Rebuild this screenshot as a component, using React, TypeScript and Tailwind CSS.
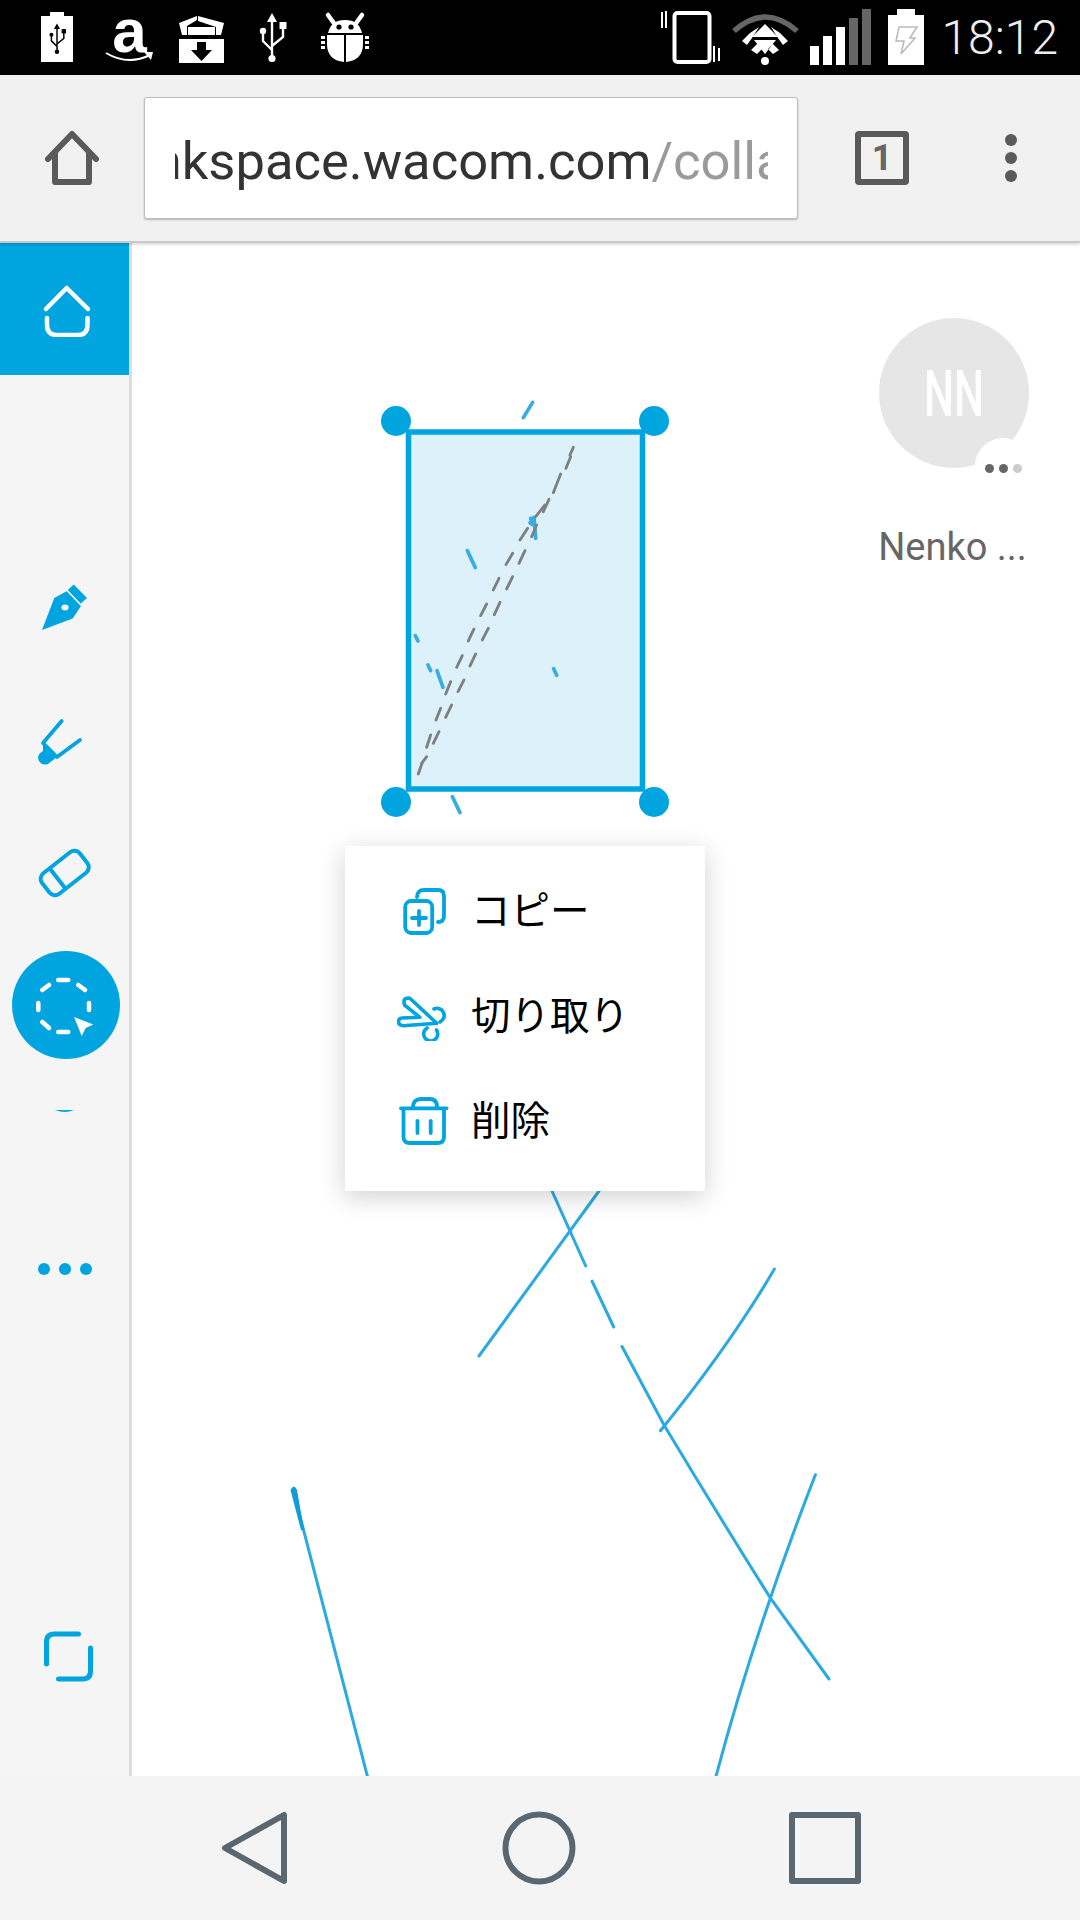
const BLUE = "#00a5e0";

const UsbGlyph = ({ color }: { color: string }) => (
  <g stroke={color} fill="none" strokeWidth="2.4">
    <path d="M272 20V58M263 33V41L272 50M283 27V37L272 46" />
    <circle cx="272" cy="58.5" r="3.6" fill={color} stroke="none" />
    <circle cx="263" cy="31" r="3.2" fill={color} stroke="none" />
    <rect x="279.5" y="22" width="7" height="7" fill={color} stroke="none" />
    <path d="M272 13L277 22H267Z" fill={color} stroke="none" />
  </g>
);

const LeftStatusIcons = () => (
  <svg width="340" height="75" viewBox="35 0 340 75" className="shrink-0">
    {/* usb battery */}
    <path d="M50 12H64V16H73V62H41V16H50Z" fill="#fff" />
    <g transform="translate(57 39) scale(.62) translate(-272 -38)">
      <UsbGlyph color="#000" />
    </g>
    {/* amazon */}
    <text x="129.5" y="52" textAnchor="middle" fontSize="62" fontWeight="700" fill="#fff" fontFamily="Liberation Sans, sans-serif">
      a
    </text>
    <path d="M106 53Q128 66 150 55" fill="none" stroke="#fff" strokeWidth="2" />
    <path d="M144 52L153 52L151 60Z" fill="#fff" />
    {/* downloads box */}
    <path d="M179 23L197 16V20L187 26V35H182ZM198 16L224 23L221 35H216V27L198 21Z" fill="#fff" />
    <rect x="188" y="27" width="27" height="8" fill="#fff" />
    <rect x="179" y="39" width="45" height="24" fill="#fff" />
    <path d="M197 42H206V50H212L201.5 61L191 50H197Z" fill="#000" />
    {/* usb */}
    <UsbGlyph color="#fff" />
    {/* bug */}
    <path d="M328 15L336 26M362 15L354 26" stroke="#fff" strokeWidth="4.5" strokeLinecap="round" />
    <path d="M328 33Q331 20 345 20Q359 20 362 33Z" fill="#fff" />
    <circle cx="339" cy="27" r="2.6" fill="#000" />
    <circle cx="351" cy="27" r="2.6" fill="#000" />
    <path d="M327 35H344V62Q327 60 327 44ZM346 35H363V44Q363 60 346 62Z" fill="#fff" />
    <path d="M321 36H325V39H321ZM321 41H325V44H321ZM321 46H325V49H321ZM365 36H369V39H365ZM365 41H369V44H365ZM365 46H369V49H365Z" fill="#fff" />
  </svg>
);

const RightStatusIcons = () => (
  <svg width="270" height="75" viewBox="660 0 270 75" className="shrink-0">
    {/* vibrate */}
    <rect x="675.5" y="13" width="35" height="49" rx="3" fill="none" stroke="#fff" strokeWidth="4" />
    <path d="M663 12V28M667 11V28M715 46V62M720 48V61" stroke="#fff" strokeWidth="2" />
    {/* wifi */}
    <path d="M735 31Q766 3 798 31" fill="none" stroke="#666" strokeWidth="5.5" />
    <path d="M766 24L779 37H753Z" fill="#fff" />
    <path d="M743 41L751 33L760 27L753 38L748 45ZM789 41L781 33L772 27L779 38L784 45ZM752 50L758 44L763 49L758 54ZM780 50L774 44L769 49L774 54ZM755 40H777L766 54Z" fill="#fff" />
    <circle cx="766" cy="61" r="4" fill="#fff" />
    {/* signal */}
    <path d="M811 46H820V65H811ZM824 36H833V65H824ZM837 27H846V65H837Z" fill="#fff" />
    <path d="M850 18H859V65H850ZM863 9H872V65H863Z" fill="#666" />
    {/* battery */}
    <path d="M898 9H916V15H925V65H889V15H898Z" fill="#fff" />
    <path d="M900 27H918L911 38H916L902 54L905 41H897Z" fill="none" stroke="#bbb" strokeWidth="1.6" />
  </svg>
);

const StatusBar = () => (
  <div className="flex h-[75px] shrink-0 items-center justify-between bg-black pl-[35px] pr-[22px]">
    <LeftStatusIcons />
    <div className="flex items-center">
      <RightStatusIcons />
      <span className="ml-3 text-[48px] font-light leading-none text-[#eeeeee]">18:12</span>
    </div>
  </div>
);

const Toolbar = () => (
  <div className="relative z-10 flex h-[168px] shrink-0 items-center border-b-2 border-[#c9c9c9] bg-[#f1f1f1] shadow-[0_2px_2px_rgba(0,0,0,0.12)]">
    <svg width="144" height="60" viewBox="0 129 144 60" className="shrink-0">
      <path
        d="M48 160L72 135L96 160M55 153V183H89V153"
        fill="none"
        stroke="#5a5a5a"
        strokeWidth="6"
        strokeLinecap="round"
        strokeLinejoin="round"
      />
    </svg>
    <div className="flex h-[122px] w-[654px] shrink-0 items-center rounded-[3px] border border-[#bdbdbd] bg-white pl-[30px] pr-[29px] pt-[6px] shadow-[0_1px_2px_rgba(0,0,0,0.25)]">
      <div className="flex w-full overflow-hidden whitespace-nowrap text-[52.5px] leading-[64px]">
        <span className="ml-[-35px] text-[#333333]">inkspace.wacom.com</span>
        <span className="text-[#9a9a9a]">/colla</span>
      </div>
    </div>
    <div className="ml-[57px] flex h-[54px] w-[54px] shrink-0 items-center justify-center rounded-[4px] border-[6px] border-[#5a5a5a] text-[36px] font-bold leading-none text-[#666666]">
      1
    </div>
    <div className="ml-[96px] flex flex-col gap-[6px]">
      <span className="h-3 w-3 rounded-full bg-[#5a5a5a]" />
      <span className="h-3 w-3 rounded-full bg-[#5a5a5a]" />
      <span className="h-3 w-3 rounded-full bg-[#5a5a5a]" />
    </div>
  </div>
);

const Sidebar = () => (
  <div className="flex w-[132px] shrink-0 flex-col items-center border-r-[3px] border-[#dcdcdc] bg-[#f5f5f5]">
    <div className="flex h-[132px] w-full shrink-0 items-center justify-center bg-[#00a5e0]">
      <svg width="50" height="56" viewBox="40 281 50 56">
        <path
          d="M46 309L66.7 288L88 309M47 318V325Q47 335 57 335H78Q87.5 335 87.5 325V318"
          fill="none"
          stroke="#fff"
          strokeWidth="4.5"
          strokeLinecap="round"
          strokeLinejoin="round"
        />
      </svg>
    </div>
    {/* pen */}
    <svg width="48" height="48" viewBox="40 584 48 48" className="mt-[209px] shrink-0">
      <path d="M41 630L53.3 598L66 591L80 606L71.7 618.6Z" fill={BLUE} />
      <path d="M72.7 584.6L86 598L79.3 604L66.7 590Z" fill={BLUE} />
      <path d="M65.5 590L81 606" stroke="#f5f5f5" strokeWidth="1.5" />
      <ellipse cx="64" cy="607.4" rx="3.6" ry="3" fill="#f5f5f5" />
    </svg>
    {/* marker */}
    <svg width="65" height="50" viewBox="32 716 65 50" className="mt-[85px] shrink-0">
      <path d="M61.7 720L43 742L57 756L80 739" stroke={BLUE} strokeWidth="3.8" strokeLinecap="round" strokeLinejoin="round" fill="none" />
      <path d="M43 742L57 756L48 763Q42 765 39 760Q36 754 43 750Z" fill={BLUE} />
    </svg>
    {/* eraser */}
    <svg width="56" height="56" viewBox="36 844 56 56" className="mt-[78px] shrink-0">
      <g transform="translate(63.7 872) rotate(-38)" fill="none" stroke={BLUE} strokeWidth="4">
        <rect x="-24" y="-13" width="48" height="26" rx="7" />
        <path d="M-9 -13V13" />
      </g>
    </svg>
    {/* selection tool, active */}
    <div className="mt-[50px] ml-[2px] flex h-[108px] w-[108px] shrink-0 items-center justify-center rounded-full bg-[#00a5e0]">
      <svg width="108" height="108" viewBox="12 950 108 108">
        <path
          d="M58.3 979H68.3M78.3 984L85 989M89 1002V1009M58.3 1031H68.3M42.3 1021L49 1027M38.3 1002V1009M42.3 989L49 984"
          fill="none"
          stroke="#fff"
          strokeWidth="4.5"
          strokeLinecap="round"
        />
        <path d="M74 1016L93.3 1023.6L85.7 1027L81.7 1035Z" fill="#fff" />
      </svg>
    </div>
    <svg width="24" height="6" viewBox="34 1107 24 6" className="mt-[50px] shrink-0">
      <path d="M36 1108H55Q46 1112 36 1108Z" fill={BLUE} />
    </svg>
    <div className="mt-[148px] flex shrink-0 gap-[9px]">
      <span className="h-3 w-3 rounded-full bg-[#00a5e0]" />
      <span className="h-3 w-3 rounded-full bg-[#00a5e0]" />
      <span className="h-3 w-3 rounded-full bg-[#00a5e0]" />
    </div>
    <svg width="60" height="56" viewBox="34.5 1628 60 56" className="mt-[353px] shrink-0">
      <path
        d="M78 1634H54Q46 1634 46 1642V1664M58 1679H82Q90 1679 90 1671V1648"
        fill="none"
        stroke={BLUE}
        strokeWidth="5"
        strokeLinecap="round"
      />
    </svg>
  </div>
);

// everything drawn on the board, in page coordinates
const BoardDrawing = () => (
  <svg width="948" height="1534" viewBox="132 243 948 1534" className="absolute left-0 top-0">
    <g fill="none" stroke="#2aaae0" strokeWidth="3" strokeLinecap="round">
      <path d="M599 1191L479 1356" />
      <path d="M552 1191L585.7 1266" />
      <path d="M592 1281L613.7 1327" />
      <path d="M622 1346.5L664 1425Q715 1510 771 1599L829 1679" />
      <path d="M774.4 1269Q730 1345 660.4 1430.7" />
      <path d="M293.7 1492L367.6 1777" />
      <path d="M815.4 1474.7Q755 1630 715.8 1777" />
    </g>
    <path d="M290.5 1490Q293.7 1483 297 1490L304 1530H301Z" fill="#0f9cd8" />
    <rect x="408.5" y="432" width="234" height="357" fill="#dcf1fa" stroke={BLUE} strokeWidth="5.5" />
    {/* this group is in 3x crop units, it holds the fine marks of the selection */}
    <g transform="translate(360 390) scale(.3333)" fill="none" strokeLinecap="round">
      <g stroke="#35ade0" strokeWidth="11">
        <path d="M490 83L518 37" />
        <path d="M277 1220L300 1268" />
        <path d="M322 482L346 533" />
        <path d="M166 737L174 753" />
        <path d="M204 825L212 842" />
        <path d="M231 842L249 892" />
        <path d="M581 836L590 856" />
        <path d="M512 385L520 405L510 398M522 382L527 445" />
      </g>
      <g stroke="#7f7f7f" strokeWidth="8.5">
        <path d="M175 1152L186 1120M200 1072L212 1035M228 990L242 955M257 912L272 875M290 832L307 797M325 753L342 717M362 677L380 642M400 600L417 565M438 524L458 490M480 450L503 415M527 380L555 345" />
        <path d="M185 1120L200 1100M220 1060L237 1025M257 982L275 945M294 905L312 870M330 828L347 792M367 750L385 715M403 674L420 637M440 597L458 560M477 520L495 482M515 440L530 405M550 365L567 328M580 308L602 252M618 235L632 200M630 195L640 172" />
      </g>
    </g>
    <circle cx="396" cy="421" r="15" fill={BLUE} />
    <circle cx="654" cy="421" r="15" fill={BLUE} />
    <circle cx="396" cy="802" r="15" fill={BLUE} />
    <circle cx="654" cy="802" r="15" fill={BLUE} />
  </svg>
);

const CopyIcon = () => (
  <svg width="52" height="56" viewBox="0 0 52 56" className="shrink-0">
    <g fill="none" stroke={BLUE} strokeWidth="3.8" strokeLinecap="round" strokeLinejoin="round">
      <rect x="8.2" y="21" width="27" height="32" rx="6" />
      <path d="M22 31V45M15 38H29" />
      <path d="M20 17Q20 10 27 10H41Q47 10 47 16V36Q47 42 41 42" />
    </g>
  </svg>
);

const CutIcon = () => (
  <svg width="52" height="56" viewBox="0 0 52 56" className="shrink-0">
    <g fill="none" stroke={BLUE} strokeWidth="3.6" strokeLinecap="round" strokeLinejoin="round">
      <path d="M39.7 38.3L6.3 40.7Q1.3 40 1.5 36.5Q2 33 4.7 33L23 32.3L7.5 20Q6 14.5 9 13.5Q12 12.5 13.7 14Z" />
      <path d="M37 24A7 7 0 1 1 43 37" />
      <path d="M39.5 45A7 7 0 1 1 30 43" />
    </g>
  </svg>
);

const TrashIcon = () => (
  <svg width="52" height="56" viewBox="0 0 52 56" className="shrink-0">
    <g fill="none" stroke={BLUE} strokeWidth="3.8" strokeLinecap="round" strokeLinejoin="round">
      <path d="M4 18.3H49.5" />
      <path d="M16 17Q16 9 24 9H33Q40 9 40 17" />
      <path d="M6.5 19V47Q6.5 53 13 53H40.5Q47 53 47 47V19" />
      <path d="M20.5 31V43M33.7 31V43" />
    </g>
  </svg>
);

const ContextMenu = () => {
  const items = [
    { icon: <CopyIcon />, label: "コピー" },
    { icon: <CutIcon />, label: "切り取り" },
    { icon: <TrashIcon />, label: "削除" },
  ];
  return (
    <div className="absolute left-[213px] top-[603px] flex h-[345px] w-[360px] flex-col bg-white pt-[9px] shadow-[0_6px_24px_rgba(0,0,0,0.18)]">
      {items.map((item) => (
        <div key={item.label} className="flex h-[105px] items-center gap-[22px] pl-[52px]">
          {item.icon}
          <span className="text-[39.5px] leading-none text-black [font-family:'Noto_Sans_CJK_JP','Noto_Sans',sans-serif]">
            {item.label}
          </span>
        </div>
      ))}
    </div>
  );
};

const Participant = () => (
  <div className="absolute left-[747px] top-[75px] flex w-[150px] flex-col items-center">
    <div className="relative h-[150px] w-[150px] rounded-full bg-[#e6e6e6]">
      <span className="absolute inset-0 flex translate-y-[2px] scale-x-[0.66] items-center justify-center text-[64px] font-medium leading-none text-white">
        NN
      </span>
      <div className="absolute left-[96px] top-[120px] flex h-[56px] w-[56px] items-start justify-center gap-[5px] rounded-full bg-white pt-[26px]">
        <span className="h-[9px] w-[9px] rounded-full bg-[#666666]" />
        <span className="h-[9px] w-[9px] rounded-full bg-[#666666]" />
        <span className="h-[9px] w-[9px] rounded-full bg-[#cccccc]" />
      </div>
    </div>
    <span className="ml-[-3px] mt-[60px] text-[38px] leading-none text-[#666666]">Nenko ...</span>
  </div>
);

const NavBar = () => (
  <div className="flex h-[144px] shrink-0 items-center bg-[#f4f4f4]">
    <svg width="1080" height="76" viewBox="0 1810 1080 76">
      <g fill="none" stroke="#5b6770" strokeWidth="6" strokeLinejoin="round">
        <path d="M225 1848L284 1815V1881Z" />
        <circle cx="539" cy="1848" r="33.5" />
        <rect x="792" y="1815" width="66" height="66" />
      </g>
    </svg>
  </div>
);

export default function App() {
  return (
    <div className="flex h-[1920px] w-[1080px] flex-col overflow-hidden bg-white [font-family:Roboto,sans-serif]">
      <StatusBar />
      <Toolbar />
      <div className="flex min-h-0 flex-1">
        <Sidebar />
        <div className="relative flex-1 overflow-hidden bg-white">
          <BoardDrawing />
          <ContextMenu />
          <Participant />
        </div>
      </div>
      <NavBar />
    </div>
  );
}
